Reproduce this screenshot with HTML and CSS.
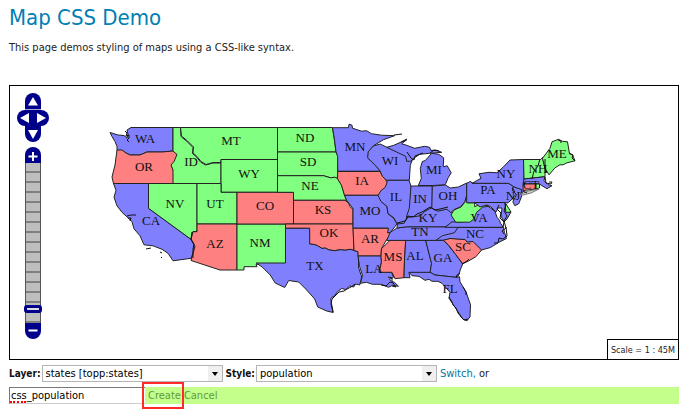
FILE: index.html
```html
<!DOCTYPE html>
<html lang="en">
<head>
<meta charset="utf-8">
<title>Map CSS Demo</title>
<link rel="stylesheet" href="styles.css">
</head>
<body>
<h1>Map CSS Demo</h1>
<p class="intro">This page demos styling of maps using a CSS-like syntax.</p>

<main class="map">
  <svg class="states" viewBox="10 86 668 273" role="img" aria-label="Map of the United States">
    <g class="shapes">
      <path class="high" d="M110 132.5l8 2.5 6 .5 3 2.500 1-4-1-4 4-2.500H173V151l-11 1h-15l-7 3-10 0-4-2-4-2.500h-5l0-4-2-5-3-5z"/>
      <path class="low" d="M117 150h5l4 3 4 2h10l7-3h15l11-1 2 1 2.500 3-3 7-3 4 2 5V183.500H113.500L112 177l3-12z"/>
      <path class="mid" d="M173 127.500h7.500l.5 9 6 5 6 6-.5 6 4 3.500 4 5 5 3 7.500-2h8V183.500H173V170l-2-5 3-3.500 3-7-3-2.500-1-1z"/>
      <path class="mid" d="M180.500 127.500H277.500V159.500H221V162.500h-8l-7 2-5-3-4-5-4-3.500.5-6-6-6-6-5z"/>
      <path class="mid" d="M221 159.500H277.500V192.300H221z"/>
      <path class="high" d="M113.500 183.500H148.500V208.300L191 239.300l4 7-2 7-2 5-18 2.500-5-7.500-6-4-9-3.500-9-1-4-9-6-7-2-7-5-5-5-4.500-5-6.500-3-8.500 2-7z"/>
      <path class="mid" d="M148.500 183.500H197V231.500H193L191 239.300 148.500 208.300z"/>
      <path class="mid" d="M197 183.500H221V192.300H237V224H197z"/>
      <path class="low" d="M197 224H237V270H220L191 260.500l2-7 2-7-4-7 2-7.800h4z"/>
      <path class="mid" d="M237 224H285.500V264.300H256l1 2.400H244V270H237z"/>
      <path class="low" d="M237 192.300H293.500V224H237z"/>
      <path class="mid" d="M277.500 127.500H332.500l2 12.500 1.500 12H277.500z"/>
      <path class="mid" d="M277.500 152H336l2.500 4.700-1 14V178.300l-3-1-4 .5-7-2.100H277.500z"/>
      <path class="mid" d="M277.500 175.700H323.500l7 2.100 4-.5 3 1 4 6.700 3 10 2 5.300H293.500V192.300H277.500z"/>
      <path class="low" d="M293.500 200.300H345l4 3 .5 3 3.500 3V224H293.500z"/>
      <path class="low" d="M285.500 224H353l1 26.500-4-1.200-5 1-5-.6-5 1-6-.7-4-2-3 .5-5-3-3-1-4.500-.5V228.300H285.500z"/>
      <path class="high" d="M285.500 228.300H309.700V244l4.500.5 3 1 5 3 3-.5 4 2 6 .7 5-1 5 .6 5-1 4 1.200 4 1.200.5 16.300 3 9-2 8-4-1-2 3-4-1-4 3.500-4-1-4 3-3 4-4 3 1 6 1.500 8-6.500-1.500-9-4-3-8-9-10-7-7-10-1.500-4 7-9.500-4.500-5-8-8-8-6-4H285.500z"/>
      <path class="high" d="M332.500 127.700H348.500l.5-3.500 3 1 .5 3 9 3 5-.5 5 3 10 1.500 13 .5-11 4-10 6-5 6.500-.5 6 7.500 7 5 6H337.700V156.700L336 151.700 334.500 140z"/>
      <path class="high" d="M373.300 146l7-2 7 3.500 13 3.500 7 3.300 2 6 4-3-3 8-1 15H386.700l-4.500-4-2.500-6-5-5.500-7-7 .5-6z"/>
      <path class="high" d="M386.700 147.300l7-2 8-3.500 5-2-5 4 5 1.500 8 3 10-2 5 1 1 3 6 0 5 2-12 1-10 1-6 4-3 3-4 0-1-5-7-3.300z"/>
      <path class="high" d="M431.700 153.300l7 1 5 3.500-.5 9 4-1 4 7-3 5-3 7-13 .7H418.300l3-7-1-10 2-7 3-1z"/>
      <path class="low" d="M337.700 171.500H380l2.500 5 2 2 4 5-2 5-3.500 2-1 3-3 1.800H344.500l-3-10-4-6.500z"/>
      <path class="high" d="M344.500 195.300H378.500l3 6.400 5.500 5 1 7 6 5 3 5-2 3-5 6-3 0 1-4.500H353V208.500l-3.500-4.500-3-4z"/>
      <path class="low" d="M353 228.300H388.500l-1 4.500h4l-5 7.200-5 8.500-.5 7.500H358V251.700l-4-1.200z"/>
      <path class="high" d="M358 256H381l.5 6-2.500 9.700 12.500.6 2 5-4 2 2 2 3 1 4 4-6-1-4 2-7-3-9 0-6-2-6 1 2-8-3-9z"/>
      <path class="low" d="M390 240.300H405.700L404.500 260l-.5 17.700-9 1-3-6.400H379l2.500-10-.5-6 .5-7.500z"/>
      <path class="high" d="M405.700 240.500H425.700l6 23-1.500 9H409l1 5.200-6 0 .5-17.700z"/>
      <path class="high" d="M425.700 240.500H443.500l5 5 6.500 8 7.700 10.500-2.500 6-1 4-2 3.500L435 275l-5-2.500 1.500-9z"/>
      <path class="low" d="M443.300 240l7-1.700 15 1 2 2.500 6-.5 8.500 8.500-6 7-7 4-6 3-8-10.500-6-8z"/>
      <path class="high" d="M409 272.300H430l5 2.700 21.500 2.300 3-.5.5 5 6 10 4.500 13-.5 12-3 4-4-1.500-6-9-8-12 1-6-8-9-4-2-6 0-3-2-4 1-6-4-7-.6z"/>
      <path class="high" d="M457 227.500H503.500l1 5 2 6-8 4-8 5-9 2.500-8.500-8.500-6 .5-2-2.500-15-1-7 1.700H435v-2l7-4 11-2.500z"/>
      <path class="high" d="M397 228l9-1.300H458.500l-4 6-12 3-7 4.700H386.700l3.500-8z"/>
      <path class="high" d="M397.500 223.300l6-1 3-5.500 10-.5 4-3 9-5 3-1 6 3.500 10-2.500 4 5 4 8-11 5.500H407l-10 1.200z"/>
      <path class="high" d="M445 227.300l7-5.500 8 .5 10-2 5-10 9-6 4 2 7 5 2 6 2.500 3 1 3 3 4z"/>
      <path class="mid" d="M451 215l3-5 7-3 4-5 .7-7 2 7.700h7v4l8-3.500 6 3-6 1-6 5-3 7-4 3-14 0z"/>
      <path class="high" d="M386.700 180.300H409l2 6-.5 20-1.500 9-5 8-7 .7-3-6-6-4.500-1-7-6-5-3-6 3-5 4-3 2-4.500z"/>
      <path class="high" d="M411 186H432.300V207.300l-3 1.500-5 3-4 4-8 1-6 .5 3-9z"/>
      <path class="high" d="M432.300 186l13-1 5 3 8-1 8.500-4V195l-2 6.700-4 5-7 3-3 3-4-3.500-9 2-6-3z"/>
      <path class="high" d="M466.700 183.300l4-2 1.500 2H508.500l5 3-1 4 4 3-3.500 5-5 4.500H466.700z"/>
      <path class="high" d="M472 183.300l9-5-2-4.500 10-1.500 8 .5 6.500-6 6.500-6.800 13.500-.5.5 14V190l-2 3-8.500-6.500-5-3.200z"/>
      <path class="mid" d="M523.500 159.500H540.500l2-2 2.500 11v8.200L524 179z"/>
      <path class="mid" d="M542.500 158.300l7.500-10 2-6.500 6.500-2.500 4 2 5 .5 2 12 3 1 2.500 6-8 2-4 2-3 0-5 3-6 7-4-6.500z"/>
      <path class="high" d="M524 179l21-2.300-1 4 4 4 4 1-5 3-5-3-3-2H523z"/>
      <path class="low" d="M523 184h13v5l-13 1.500z"/>
      <path class="mid" d="M536 184h3.500v4l-3.500 1z"/>
      <path class="high" d="M513.300 186.700l8.500 3-1 4 1 2-3 8-4 2-2-4 3.700-7-4-4z"/>
      <path class="high" d="M474.500 202.500H505l1 9.500h5l-4 7-3 3-3-6 1-8-4 0-2 4-5-5-4-2-7 2z"/>
      <path class="mid" d="M505 202.500l6 9.500-5 .5z"/>
      <path class="island" d="M521 194l7-3 11-2-8 4-8 2z"/>
    </g>
    <g class="coast">
      <path d="M125 131l2 2-1 3 3-1 0 3-2 2 2 2"/>
      <path d="M192 232l-1 7 3 5-1 5 0 9"/>
      <path d="M127 216l4-1 5 0M128 218l3 0-1 3M146 249l5-1M160 252l2 1M161 257l1 1"/>
      <path d="M355 284l-4 3-4 2-3 2-5 1-4 4-3 3-1 5 2 8"/>
      <path d="M381 285l5 1 4-4 3 1 3 4-4-1M388 277l4 1 0 3"/>
      <path d="M394 135l8-1M407 139l-6 3"/>
      <path d="M397 223l8-2 3-5 5 1 4-3 5-2 8-5 5 3 5-1 8-2"/>
      <path d="M449 297l3 5 1 3 3 3 2 5 4 5 2 2 4-1M463 287l3 5 0 3"/>
      <path d="M499 205l-2 4 4 4-1 5 4 4-1 5M506 204l-2 7 3 5-3 5 2 7-4 3 2 3M506 227l1 9-4 3-4-1-1 5-4 0"/>
      <path d="M545 177l1 6 5 1 1-2-3 0M523 191l4 2M512 188l3 4"/>
      <path d="M540 159l-2 7-4 5-2 8M545 159l0 9 2 5M558 140l3 1 0 2M569 153l4 2-1 3 3 3"/>
      <path d="M407 152l4 6 3 2 1-4 8-3M430 153l4-3 5 1"/>
      <path d="M460 273l-3 2-1 3M462 264l5-3 2-2"/>
    </g>
    <g class="names">
      <text x="145" y="143">WA</text><text x="144" y="171">OR</text><text x="191" y="166">ID</text>
      <text x="231" y="145">MT</text><text x="305" y="142">ND</text><text x="308" y="166">SD</text>
      <text x="310" y="190">NE</text><text x="249" y="178">WY</text><text x="265" y="210">CO</text>
      <text x="323" y="214">KS</text><text x="329" y="237">OK</text><text x="260" y="247">NM</text>
      <text x="315" y="270">TX</text><text x="215" y="248">AZ</text><text x="215" y="208">UT</text>
      <text x="175" y="208">NV</text><text x="151" y="225">CA</text><text x="355" y="151">MN</text>
      <text x="390" y="165">WI</text><text x="362" y="185">IA</text><text x="434" y="174">MI</text>
      <text x="396" y="201">IL</text><text x="420" y="203">IN</text><text x="448" y="200">OH</text>
      <text x="370" y="215">MO</text><text x="370" y="243">AR</text><text x="374" y="273">LA</text>
      <text x="393" y="261">MS</text><text x="415" y="260">AL</text><text x="443" y="262">GA</text>
      <text x="420" y="236">TN</text><text x="428" y="222">KY</text><text x="450" y="293">FL</text>
      <text x="488" y="194">PA</text><text x="506" y="178">NY</text><text x="513" y="200">NJ</text>
      <text x="557" y="158">ME</text><text x="538" y="173">NH</text><text x="531" y="189">CT</text>
      <text x="479" y="222">VA</text><text x="475" y="238">NC</text><text x="463" y="251">SC</text>
    </g>
  </svg>

  <div class="controls">
    <div class="pan">
      <button type="button" class="north" aria-label="Pan up"><svg width="16" height="17" viewBox="0 0 16 17"><path class="pad" d="M0 16V8a8 8 0 0 1 16 0v8z"/><path class="seam" d="M0 16h16v1H0z"/><path class="glyph" d="M8 4l5 8.500H3z"/></svg></button>
      <button type="button" class="west" aria-label="Pan left"><svg width="16" height="16" viewBox="0 0 16 16"><path class="pad" d="M16 0H8a8 8 0 0 0 0 16h8z"/><path class="glyph" d="M3 8l9-5v10z"/></svg></button>
      <button type="button" class="east" aria-label="Pan right"><svg width="16" height="16" viewBox="0 0 16 16"><path class="pad" d="M0 0h8a8 8 0 0 1 0 16H0z"/><path class="glyph" d="M13 8L4 3v10z"/></svg></button>
      <button type="button" class="south" aria-label="Pan down"><svg width="16" height="16" viewBox="0 0 16 16"><path class="pad" d="M0 0v8a8 8 0 0 0 16 0V0z"/><path class="glyph" d="M8 13L3 4h10z"/></svg></button>
    </div>
    <button type="button" aria-label="Zoom in"><svg width="16" height="16" viewBox="0 0 16 16"><path class="pad" d="M0 16V8a8 8 0 0 1 16 0v8z"/><path class="sign" d="M8 5v9M3.500 9.500h9"/></svg></button>
    <input class="zoom" type="range" min="0" max="15" value="1" aria-label="Zoom level">
    <button type="button" aria-label="Zoom out"><svg width="16" height="16" viewBox="0 0 16 16"><path class="pad" d="M0 0v8a8 8 0 0 0 16 0V0z"/><path class="sign" d="M3.500 7.500h9"/></svg></button>
  </div>
  <div class="scale">Scale = 1 : 45M</div>
</main>

<form class="choices">
  <label for="layer">Layer:</label>
  <span class="picker"><select id="layer"><option>states [topp:states]</option></select></span>
  <label for="style">Style:</label>
  <span class="picker"><select id="style"><option>population</option></select></span>
  <span class="after"><a href="#">Switch,</a> or</span>
</form>

<form class="create">
  <span class="name"><input type="text" value="css_population" aria-label="Style name" spellcheck="false"></span>
  <a class="boxed" href="#">Create</a>
  <a href="#">Cancel</a>
</form>
</body>
</html>
```
FILE: styles.css
```css
* { box-sizing: border-box; }

body {
  margin: 0;
  padding: 4px 2px 8px 9px;
  background: #fff;
  color: #222;
  font: 11px/16px "DejaVu Sans Condensed", "DejaVu Sans", sans-serif;
}

h1 {
  margin: 0;
  color: #0080b3;
  font-size: 22px;
  font-weight: normal;
  line-height: 28px;
}

.intro { margin: 8px 0 29px; }

a { color: #0076a1; text-decoration: none; }

.map {
  position: relative;
  border: 1px solid #000;
}

.states { display: block; width: 100%; height: auto; }
.shapes path { stroke: #222; stroke-width: 1; stroke-linejoin: round; }
.shapes .high { fill: #8080ff; }
.shapes .mid { fill: #80ff80; }
.shapes .low { fill: #ff8080; }
.shapes .island { fill: #ccc; stroke: #777; }
.coast path { fill: none; stroke: #111; stroke-width: 1; }
.names text {
  fill: #111;
  font-family: "Liberation Serif", serif;
  font-size: 13px;
  text-anchor: middle;
}

.controls {
  position: absolute;
  top: 7px;
  left: 7px;
  display: flex;
  flex-direction: column;
  align-items: center;
}

.controls button {
  display: block;
  padding: 0;
  border: 0;
  background: none;
  line-height: 0;
}

.controls svg { display: block; }
.pad { fill: #00008b; }
.seam { fill: #aaaad4; }
.glyph { fill: #fff; }
.sign { fill: none; stroke: #fff; stroke-width: 2; }

.pan {
  display: grid;
  grid-template-columns: 16px 16px;
  justify-items: center;
  margin-bottom: 5px;
}

.north, .south { grid-column: 1 / 3; }

.zoom {
  appearance: none;
  writing-mode: vertical-lr;
  direction: rtl;
  display: block;
  width: 18px;
  height: 160px;
  margin: 0;
  background: none;
}

.zoom::-webkit-slider-runnable-track {
  width: 16px;
  height: 160px;
  margin: 0 1px;
  border: solid #555;
  border-width: 0 1px;
  background: repeating-linear-gradient(#bebebe 0 8px, #808080 8px 10px);
}

.zoom::-webkit-slider-thumb {
  appearance: none;
  width: 18px;
  height: 8px;
  margin-left: -2px;
  border: 3px solid #00008b;
  border-radius: 3px;
  background: #ddd;
}

.scale {
  position: absolute;
  right: 0;
  bottom: 0;
  padding: 2px 3px 1px;
  border: solid #000;
  border-width: 1px 0 0 1px;
  background: #fff;
  font-size: 9px;
}

.choices {
  display: flex;
  align-items: center;
  gap: 1px;
  margin-top: 5px;
}

.choices label {
  color: #111;
  font-size: 10px;
  font-weight: bold;
}

.picker {
  position: relative;
  flex: 0 1 181px;
  margin-right: 2px;
}

.picker select {
  appearance: none;
  display: block;
  width: 100%;
  height: 17px;
  padding: 0 18px 0 3px;
  border: 1px solid #b5b5b5;
  border-radius: 0;
  background: linear-gradient(#efefef, #efefef) right / 14px 100% no-repeat #fff;
  color: #000;
  font: inherit;
  line-height: 15px;
}

.picker::after {
  content: "";
  position: absolute;
  top: 7px;
  right: 5px;
  border: 3px solid transparent;
  border-top: 4px solid #000;
  border-bottom: 0;
  pointer-events: none;
}

.create {
  display: flex;
  gap: 3px;
  margin-top: 5px;
  background: #c5ff8b;
}

.create a { color: #5f9940; line-height: 17px; }

.name { position: relative; flex: 0 1 136px; }

.name input {
  display: block;
  width: 100%;
  height: 17px;
  padding: 0 1px;
  border: 1px solid #ccc;
  border-top-color: #777;
  border-left-color: #777;
  border-right: 0;
  background: #fff;
  color: #000;
  font: inherit;
}

/* misspelling mark under the first word */
.name::after {
  content: "";
  position: absolute;
  left: 1px;
  bottom: 1px;
  width: 16px;
  border-bottom: 2px dotted #f00;
}

.boxed { position: relative; }

.boxed::after {
  content: "";
  position: absolute;
  inset: -5px -3px -5px -6px;
  border: 2px solid #ff2a2a;
}
```
